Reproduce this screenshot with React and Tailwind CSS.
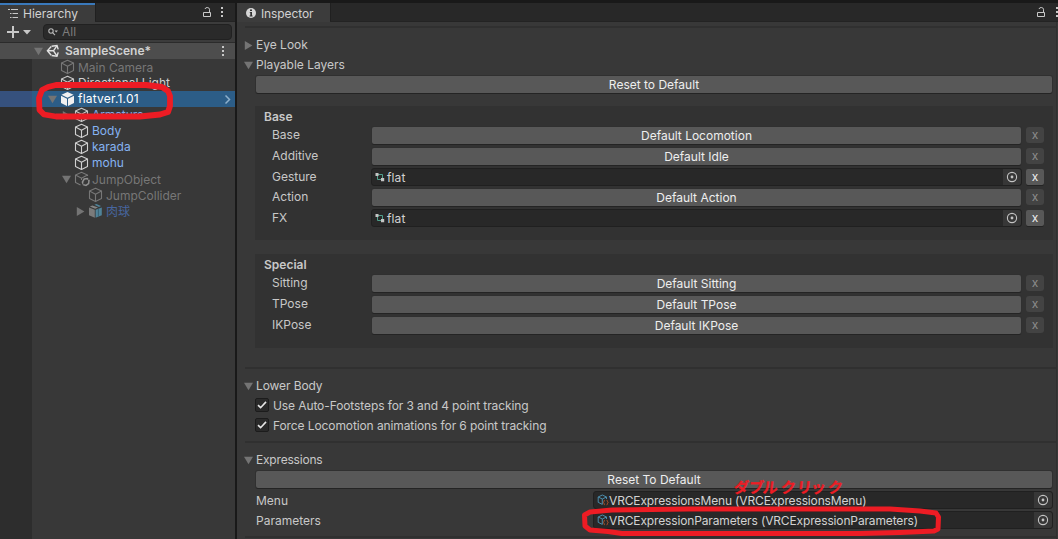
import React from "react";

const CubeIcon = ({ className = "" }) => (
  <svg className={`w-4 h-4 shrink-0 ${className}`} viewBox="0 0 16 16" fill="none" stroke="currentColor" strokeWidth="1.1" strokeLinejoin="round">
    <path d="M7.5 1.3 L13.5 4.1 V11.5 L7.5 14.5 L1.5 11.5 V4.1 Z" />
    <path d="M1.5 4.1 L7.5 7.2 L13.5 4.1 M7.5 7.2 V14.5" />
  </svg>
);

const SolidCubeIcon = () => (
  <svg className="w-4 h-4 shrink-0" viewBox="0 0 16 16" fill="#f0f0f0">
    <path d="M7.5 1 L13.5 3.8 L7.5 6.8 L1.5 3.8 Z" />
    <path d="M1 4.7 L7 7.7 V15 L1 12 Z" />
    <path d="M14 4.7 L8 7.7 V15 L14 12 Z" />
  </svg>
);

const LinkedCubeIcon = () => (
  <svg className="w-4 h-4 shrink-0 overflow-visible" viewBox="0 0 16 16" fill="none" stroke="#7b7b7b" strokeWidth="1.1">
    <path d="M13.5 5 V4.1 L7.5 1.3 L1.5 4.1 V11.5 L6.5 14 M1.5 4.1 L7.5 7.2 L13.5 4.1 M7.5 7.2 V9" />
    <path d="M10.2 8 L13.2 7.6 L15 9.6 L14.6 12.6 L12 14.4 L9.4 13.6 L8.4 11 Z" stroke="#929292" strokeWidth="1.5" />
    <path d="M8.6 13.6 L14.8 8.2" stroke="#383838" strokeWidth="0.9" strokeDasharray="2 4.2" />
  </svg>
);

const PrefabIcon = () => (
  <svg className="w-4 h-4 shrink-0" viewBox="0 0 16 16">
    <path d="M1 4.4 L6.8 6.8 V14.8 L1 12.2 Z" fill="#7b7b7b" />
    <path d="M7.6 6.8 L13.8 4.4 V12.2 L7.6 14.8 Z" fill="#508399" />
    <path d="M1.8 3.4 L4.4 2.4 L10 4.6 L7.2 5.8 Z" fill="#858585" />
    <path d="M6.4 1.8 L8.4 1 L13 3 L11 3.9 Z" fill="#508399" />
    <path d="M10.4 5.6 V13.6" stroke="#33596b" strokeWidth="0.8" />
  </svg>
);

const UnityIcon = () => (
  <svg className="w-3.5 h-3.5 shrink-0" viewBox="0 0 14 14" fill="none" stroke="#e0e0e0" strokeWidth="1.4">
    <path d="M5.2 2.5 L1.4 6.8 L5.2 11.3 M1.6 6.8 H7.5 L11 1.7 M7.5 6.8 L11 12" />
    <path d="M5.6 2.3 L11 1.5 L12.2 5.4 M5.6 11.5 L11 12.3 L12.2 8.4" />
  </svg>
);

const LockIcon = () => (
  <svg className="w-2.5 h-3 shrink-0" viewBox="0 0 10 12" fill="none" stroke="#c8c8c8" strokeWidth="1">
    <path d="M1.5 6.5 H8.5 V10.5 H1.5 Z" />
    <path d="M7.5 6 V3.2 Q7.2 1.5 5.2 1.5 Q3.4 1.5 3 3" />
  </svg>
);

const DotsIcon = () => (
  <svg className="w-1 h-3 shrink-0" viewBox="0 0 4 12" fill="#c8c8c8">
    <path d="M1 1 H3 V3 H1 Z M1 5 H3 V7 H1 Z M1 9 H3 V11 H1 Z" />
  </svg>
);

const Arrow = ({ open, className = "" }) => (
  <svg className={`w-[9px] h-[9px] shrink-0 ${className}`} viewBox="0 0 9 9" fill="#747474">
    {open ? <path d="M0 0.8 H9 L4.5 8.2 Z" /> : <path d="M0.8 0 L8.4 4.5 L0.8 9 Z" />}
  </svg>
);

const ControllerIcon = () => (
  <svg className="w-2.5 h-2.5 shrink-0" viewBox="0 0 10 10" fill="none">
    <path d="M3 2.5 H7.5 V6 M2.5 4 V7.5 H6" stroke="#4fa08c" />
    <path d="M0.5 1 H3.5 V4 H0.5 Z M6 6 H9.2 V9.2 H6 Z" fill="#c4c4c4" />
  </svg>
);

const AssetIcon = () => (
  <svg className="w-3 h-3 shrink-0" viewBox="0 0 12 12" fill="none" stroke="#4b8cab" strokeWidth="1">
    <path d="M5.5 10.5 L1.2 8.3 V3 L5.3 1 L9.5 3 V5 M1.2 3 L5.3 5 L9.5 3 M5.3 5 V10" />
    <path d="M7.8 6.3 Q7 6.3 7 7.4 L6.4 8.5 L7 9.5 Q7 10.8 7.8 10.8 M9.6 6.3 Q10.5 6.3 10.5 7.4 L11.1 8.5 L10.5 9.5 Q10.5 10.8 9.6 10.8" stroke="#b9562c" />
  </svg>
);

const PickerIcon = () => (
  <svg className="w-3 h-3" viewBox="0 0 12 12" fill="none">
    <circle cx="6" cy="6" r="4.6" stroke="#c4c4c4" strokeWidth="1.1" />
    <circle cx="6" cy="6" r="1.4" fill="#c4c4c4" />
  </svg>
);

const hierarchy = [
  { name: "Main Camera", pad: "pl-[60px]", color: "text-[#777777] pt-[2px]", icon: <CubeIcon className="text-[#777777]" /> },
  { name: "Directional Light", pad: "pl-[60px]", color: "text-[#d0d0d0]", icon: <CubeIcon className="text-[#c8c8c8]" /> },
  { name: "flatver.1.01", pad: "pl-[60px]", color: "text-white tracking-[0.2px]", icon: <SolidCubeIcon />, open: true, selected: true },
  { name: "Armature", pad: "pl-[74px]", color: "text-[#7fa9ea] tracking-[-0.1px]", icon: <CubeIcon className="text-[#c8c8c8]" />, open: false },
  { name: "Body", pad: "pl-[74px]", color: "text-[#85b3f2]", icon: <CubeIcon className="text-[#d0d0d0]" /> },
  { name: "karada", pad: "pl-[74px]", color: "text-[#85b3f2]", icon: <CubeIcon className="text-[#d0d0d0]" /> },
  { name: "mohu", pad: "pl-[74px]", color: "text-[#85b3f2]", icon: <CubeIcon className="text-[#d0d0d0]" /> },
  { name: "JumpObject", pad: "pl-[74px]", color: "text-[#777777] pt-[2px]", icon: <LinkedCubeIcon />, open: true },
  { name: "JumpCollider", pad: "pl-[88px]", color: "text-[#777777] pt-[2px]", icon: <CubeIcon className="text-[#777777]" /> },
  { name: "肉球", pad: "pl-[88px]", color: "text-[#4766a0] pt-[2px]", icon: <PrefabIcon />, open: false },
];

const baseLayers = [
  { label: "Base", button: "Default Locomotion", height: "h-[21px]" },
  { label: "Additive", button: "Default Idle", height: "h-[20px]" },
  { label: "Gesture", value: "flat", height: "h-[21px]" },
  { label: "Action", button: "Default Action", height: "h-[20px]" },
  { label: "FX", value: "flat", height: "h-[21px]" },
];

const specialLayers = [
  { label: "Sitting", button: "Default Sitting", height: "h-[21px]" },
  { label: "TPose", button: "Default TPose", height: "h-[21px]" },
  { label: "IKPose", button: "Default IKPose", height: "h-[21px]" },
];

const Button = ({ children, className = "" }) => (
  <button className={`h-[17px] rounded-[2px] bg-[#585858] text-[#eeeeee] leading-[17px] shadow-[0_1px_0_#242424,0_0_0_1px_#303030] ${className}`}>
    {children}
  </button>
);

const ObjectField = ({ icon, value, className = "" }) => (
  <div className={`h-[18px] flex items-center rounded-[3px] border border-[#202020] bg-[#282828] text-[#d2d2d2] ${className}`}>
    {icon}
    <span className="flex-1 whitespace-nowrap">{value}</span>
    <span className="w-[18px] h-4 flex items-center justify-center bg-[#373737] rounded-r-[3px]">
      <PickerIcon />
    </span>
  </div>
);

const LayerRow = ({ label, button, value, height }) => (
  <div className={`flex items-start ${height}`}>
    <span className={button ? "w-[100px] leading-[17px]" : "w-[100px] leading-[17px] pt-px"}>{label}</span>
    {button ? (
      <Button className="w-[649px] mt-px">{button}</Button>
    ) : (
      <ObjectField
        className="w-[651px] -ml-px -mr-px pl-[3px] mt-px"
        icon={<ControllerIcon />}
        value={<span className="block pl-0.5 pt-px tracking-[0.1px]">{value}</span>}
      />
    )}
    <span
      className={
        button
          ? "ml-[5px] mt-px w-[18px] h-4 rounded-[3px] bg-[#434343] text-[#8d8d8d] text-center leading-4"
          : "ml-[5px] mt-[2px] w-[18px] h-4 rounded-[2px] bg-[#585858] text-[#eeeeee] text-center leading-4 shadow-[0_1px_0_#242424]"
      }
    >
      x
    </span>
  </div>
);

const Foldout = ({ open, className = "", children }) => (
  <div className={`h-5 flex items-center pl-[7px] ${className}`}>
    <Arrow open={open} />
    <span className="ml-[3px]">{children}</span>
  </div>
);

const Check = ({ children }) => (
  <div className="h-5 flex items-center pl-[18px]">
    <span className="w-[14px] h-[14px] mb-[2px] border border-[#1c1c1c] bg-[#2a2a2a] rounded-[2px] flex items-center justify-center">
      <svg className="w-3 h-3 shrink-0" viewBox="0 0 12 12" fill="none" stroke="#e6e6e6" strokeWidth="1.6">
        <path d="M2 6.2 L4.6 8.7 L10 2.9" />
      </svg>
    </span>
    <span className="ml-1 tracking-[-0.1px]">{children}</span>
  </div>
);

const Hierarchy = () => (
  <div className="w-[235px] h-full bg-[#383838] flex flex-col">
    <div className="h-[19px] flex bg-[#282828] border-b border-[#232323]">
      <div className="w-[95px] h-[19px] bg-[#3c3c3c] border-t-2 border-[#3a79bb] flex items-center pl-2">
        <svg className="w-[11px] h-[9px]" viewBox="0 0 11 9" stroke="#c8c8c8">
          <path d="M0 0.5 H2 M3 0.5 H10 M2 4.5 H3.5 M4.5 4.5 H10 M2 8.5 H3.5 M4.5 8.5 H10" />
        </svg>
        <span className="ml-1 text-[#d2d2d2]">Hierarchy</span>
      </div>
      <div className="flex-1 flex items-center justify-end pr-[11px] gap-2 border-l border-[#202020]">
        <LockIcon />
        <DotsIcon />
      </div>
    </div>
    <div className="h-[21px] flex items-center bg-[#3c3c3c] border-b border-[#2b2b2b] pl-[7px]">
      <svg className="w-6 h-3" viewBox="0 0 24 12" fill="#c8c8c8">
        <path d="M5 0 H7 V5 H12 V7 H7 V12 H5 V7 H0 V5 H5 Z M16 4 H24 L20 8.5 Z" />
      </svg>
      <div className="ml-3 w-[189px] h-4 rounded-[4px] border border-[#212121] bg-[#2a2a2a] flex items-center pl-1 text-[#7c7c7c]">
        <svg className="w-2.5 h-2.5" viewBox="0 0 10 10" fill="none" stroke="#bbbbbb" strokeWidth="1.1">
          <circle cx="3" cy="4" r="2.2" />
          <path d="M4.6 5.6 L7 8.2" />
          <path d="M6.5 3.5 H10 L8.2 5.5 Z" fill="#bbbbbb" stroke="none" />
        </svg>
        <span className="ml-1">All</span>
      </div>
    </div>
    <div className="h-4 bg-[#4d4d4d] flex items-center pl-[34px]">
      <Arrow open />
      <span className="ml-[3px]"><UnityIcon /></span>
      <span className="ml-[5px] flex-1 font-semibold text-[#d2d2d2]">SampleScene*</span>
      <span className="pr-[10px]"><DotsIcon /></span>
    </div>
    <div className="flex-1">
      {hierarchy.map((item, idx) => (
        <div key={idx} className={`h-4 flex ${item.selected ? "bg-[#2c5d87]" : ""}`}>
          <div className={item.selected ? "w-8 -mr-8 bg-[#36517d]" : "w-8 -mr-8 bg-[#2d2d2d]"} />
          <div className={`flex-1 flex items-center ${item.pad}`}>
            {item.open !== undefined && <Arrow open={item.open} className="-ml-3 mr-[3px]" />}
            {item.icon}
            <span className={`ml-[2px] whitespace-nowrap ${item.color}`}>{item.name}</span>
          </div>
          {item.selected && (
            <svg className="w-2 h-4 mr-[3px]" viewBox="0 0 8 16" fill="none" stroke="#8fb0cb" strokeWidth="1.5">
              <path d="M1.5 4.5 L5.5 8.5 L1.5 12.5" />
            </svg>
          )}
        </div>
      ))}
      <div className="w-8 h-[320px] bg-[#2d2d2d]" />
    </div>
  </div>
);

const Inspector = () => (
  <div className="ml-[2px] w-[821px] h-full bg-[#383838] text-[#c8c8c8]">
    <div className="h-[19px] flex bg-[#282828] border-b border-[#232323]">
      <div className="w-[93px] h-[19px] bg-[#3c3c3c] flex items-center pl-[9px] pt-px">
        <svg className="w-2.5 h-2.5" viewBox="0 0 10 10">
          <circle cx="5" cy="5" r="5" fill="#d6d6d6" />
          <path d="M4 1.6 H6 V3 H4 Z M3.7 4 H6 V7.5 H6.6 V8.4 H3.6 V7.5 H4.3 V4.8 H3.7 Z" fill="#303030" />
        </svg>
        <span className="ml-[5px] pt-px text-[#d2d2d2] tracking-[-0.1px]">Inspector</span>
      </div>
      <div className="flex-1 flex items-center justify-end gap-[9px] -mr-px border-l border-[#202020]">
        <LockIcon />
        <DotsIcon />
      </div>
    </div>
    <div className="h-[517px] border-r border-[#303030] mr-px">
      <div className="ml-2 pt-1">
        <div className="h-[2px] bg-[#303030]" />
      </div>
      <div className="pt-[7px]">
        <Foldout>Eye Look</Foldout>
        <Foldout open>Playable Layers</Foldout>
      </div>
      <div className="pl-[19px] pt-px">
        <Button className="block w-[796px]">Reset to Default</Button>
      </div>
      <div className="ml-[18px] mt-[13px] w-[798px] h-[134px] bg-[#323232] pl-[9px] pt-1">
        <div className="h-4 leading-[14px] font-semibold">Base</div>
        <div className="pl-2">
          {baseLayers.map((layer) => (
            <LayerRow key={layer.label} {...layer} />
          ))}
        </div>
      </div>
      <div className="ml-[18px] mt-[14px] w-[798px] h-[94px] bg-[#323232] pl-[9px] pt-1">
        <div className="h-4 leading-[14px] font-semibold">Special</div>
        <div className="pl-2">
          {specialLayers.map((layer) => (
            <LayerRow key={layer.label} {...layer} />
          ))}
        </div>
      </div>
      <div className="ml-2 mt-[19px] h-[2px] bg-[#303030]" />
      <div className="pt-[7px]">
        <Foldout open className="tracking-[-0.1px]">Lower Body</Foldout>
        <Check>Use Auto-Footsteps for 3 and 4 point tracking</Check>
        <Check>Force Locomotion animations for 6 point tracking</Check>
      </div>
      <div className="ml-2 mt-[5px] h-[2px] bg-[#303030]" />
      <div className="pt-[7px]">
        <Foldout open className="tracking-[-0.2px]">Expressions</Foldout>
      </div>
      <div className="pl-[19px] pt-px">
        <Button className="block w-[796px]">Reset To Default</Button>
        <div className="pt-[3px]">
          <div className="h-5 flex">
            <span className="w-[337px] leading-[19px]">Menu</span>
            <ObjectField
              className="w-[460px] pl-[3px] tracking-[-0.14px]"
              icon={<AssetIcon />}
              value={<span className="block pt-[2px]">VRCExpressionsMenu (VRCExpressionsMenu)</span>}
            />
          </div>
          <div className="h-5 flex">
            <span className="w-[337px] leading-[19px]">Parameters</span>
            <ObjectField
              className="w-[460px] pl-[3px] tracking-[-0.14px]"
              icon={<AssetIcon />}
              value={<span className="block pt-[2px]">VRCExpressionParameters (VRCExpressionParameters)</span>}
            />
          </div>
        </div>
      </div>
      <div className="ml-2 mt-[5px] h-[2px] bg-[#303030]" />
    </div>
  </div>
);

const Markup = () => (
  <>
    <svg className="absolute left-0 top-0 w-[1058px] h-[539px]" viewBox="0 0 1058 539" fill="none" stroke="#ed1c24" strokeLinejoin="round">
      <path d="M48 87 L56 85 L146 85 L162 87 L168 91 L170 96 L170 106 L168 112 L160 114.5 L140 116.5 L56 116.5 L44 114.5 L39.5 110 L39 98 L42 90 Z" strokeWidth="5.8" />
      <path d="M590 512 L612 510 L690 509 L890 509 L920 511 L936 513 L938.5 517 L938 529 L934 531 L900 532.5 L860 533.5 L622 533.5 L608 531.5 L590 530 L585 526 L584.5 515 Z" strokeWidth="5" />
    </svg>
    <div className="absolute left-[734px] top-[477px] flex text-[15px] leading-5 font-bold text-[#ed1c24] -skew-x-6 [-webkit-text-stroke:0.3px_#ed1c24] font-['Noto_Sans_CJK_JP',sans-serif]">
      <span className="w-[15px]">ダ</span>
      <span className="w-[14px]">ブ</span>
      <span className="w-[18px]">ル</span>
      <span className="w-4">ク</span>
      <span className="w-[14px]">リ</span>
      <span className="w-[17px]">ッ</span>
      <span className="w-[14px]">ク</span>
    </div>
  </>
);

const App = () => {
  return (
    <div className="relative w-[1058px] h-[539px] overflow-hidden bg-[#191919] pt-[3px] flex text-[12px] leading-4 font-['Inter','Noto_Sans_CJK_JP',sans-serif]">
      <Hierarchy />
      <Inspector />
      <Markup />
    </div>
  );
};

export default App;
